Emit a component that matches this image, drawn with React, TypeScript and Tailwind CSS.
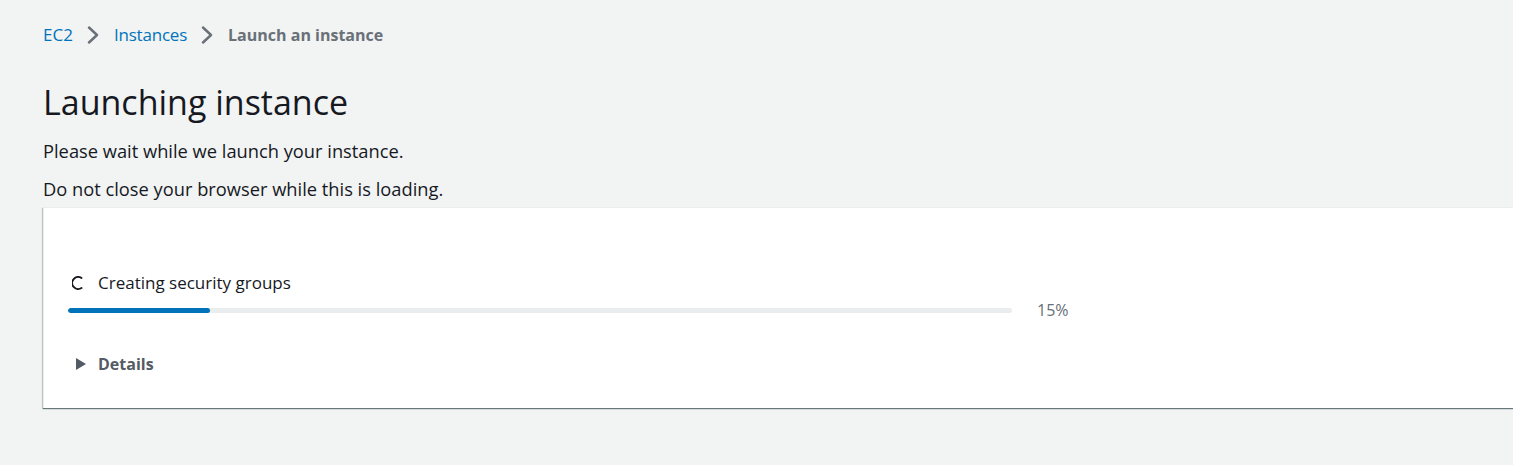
const font = { fontFamily: '"Open Sans", "Noto Sans", sans-serif' }

function Chevron() {
    return (
        <svg width="12" height="18" viewBox="0 0 12 18" className="ml-[14px] mr-[15px] shrink-0">
            <path d="M2 1.5 L10 9 L2 16.5" fill="none" stroke="#687078" strokeWidth="2.4" strokeLinecap="round" strokeLinejoin="round" />
        </svg>
    )
}

function Spinner() {
    return (
        <svg width="14" height="14" viewBox="0 0 14 14" className="shrink-0">
            <path d="M9.5 2 A6 6 0 1 0 9.5 12" fill="none" stroke="#16191f" strokeWidth="1.9" strokeLinecap="round" />
        </svg>
    )
}

export default function App() {
    const progress = 15

    return (
        <div className="min-h-[465px] w-[1513px] overflow-hidden bg-[#f2f3f3] text-[#16191f]" style={font}>
            <div className="pl-[43px]">
                {/* Breadcrumbs */}
                <nav className="flex items-center h-[70px] text-[17px]">
                    <a className="text-[#0073bb]">EC2</a>
                    <Chevron />
                    <a className="text-[#0073bb] tracking-[-0.2px]">Instances</a>
                    <Chevron />
                    <span className="font-bold text-[16px] text-[#687078]">Launch an instance</span>
                </nav>

                <h1 className="text-[34px] leading-[44px] mt-[10px] font-normal">Launching instance</h1>
                <p className="text-[18.3px] leading-[22px] mt-[16px]">Please wait while we launch your instance.</p>
                <p className="text-[18.3px] leading-[22px] mt-[16px]">Do not close your browser while this is loading.</p>

                {/* Progress card */}
                <div className="mt-[7px] mr-[-20px] h-[201px] bg-white border-l border-t border-[#eaeded] shadow-[0_1px_1px_0_rgba(0,28,36,0.5),-1px_1px_1px_0_rgba(0,28,36,0.15)]">
                    <div className="pl-[24px] pt-[63px]">
                        <div className="flex items-center gap-[12px] pl-[4px] text-[17px] leading-[24px]">
                            <Spinner />
                            <span>Creating security groups</span>
                        </div>
                        <div className="flex items-center mt-[3px]">
                            <div className="w-[944px] h-[5px] rounded-full bg-[#eaeded] overflow-hidden">
                                <div className="h-full bg-[#0073bb] rounded-full" style={{ width: `${progress}%` }} />
                            </div>
                            <span className="ml-[25px] text-[16px] text-[#687078]">{progress}%</span>
                        </div>
                        <div className="flex items-center gap-[12px] mt-[30px] pl-[8px] text-[16px] font-bold text-[#545b64]">
                            <svg width="10" height="12" viewBox="0 0 10 12">
                                <path d="M0 0 L10 6 L0 12 Z" fill="#545b64" />
                            </svg>
                            <span>Details</span>
                        </div>
                    </div>
                </div>
            </div>
        </div>
    )
}
